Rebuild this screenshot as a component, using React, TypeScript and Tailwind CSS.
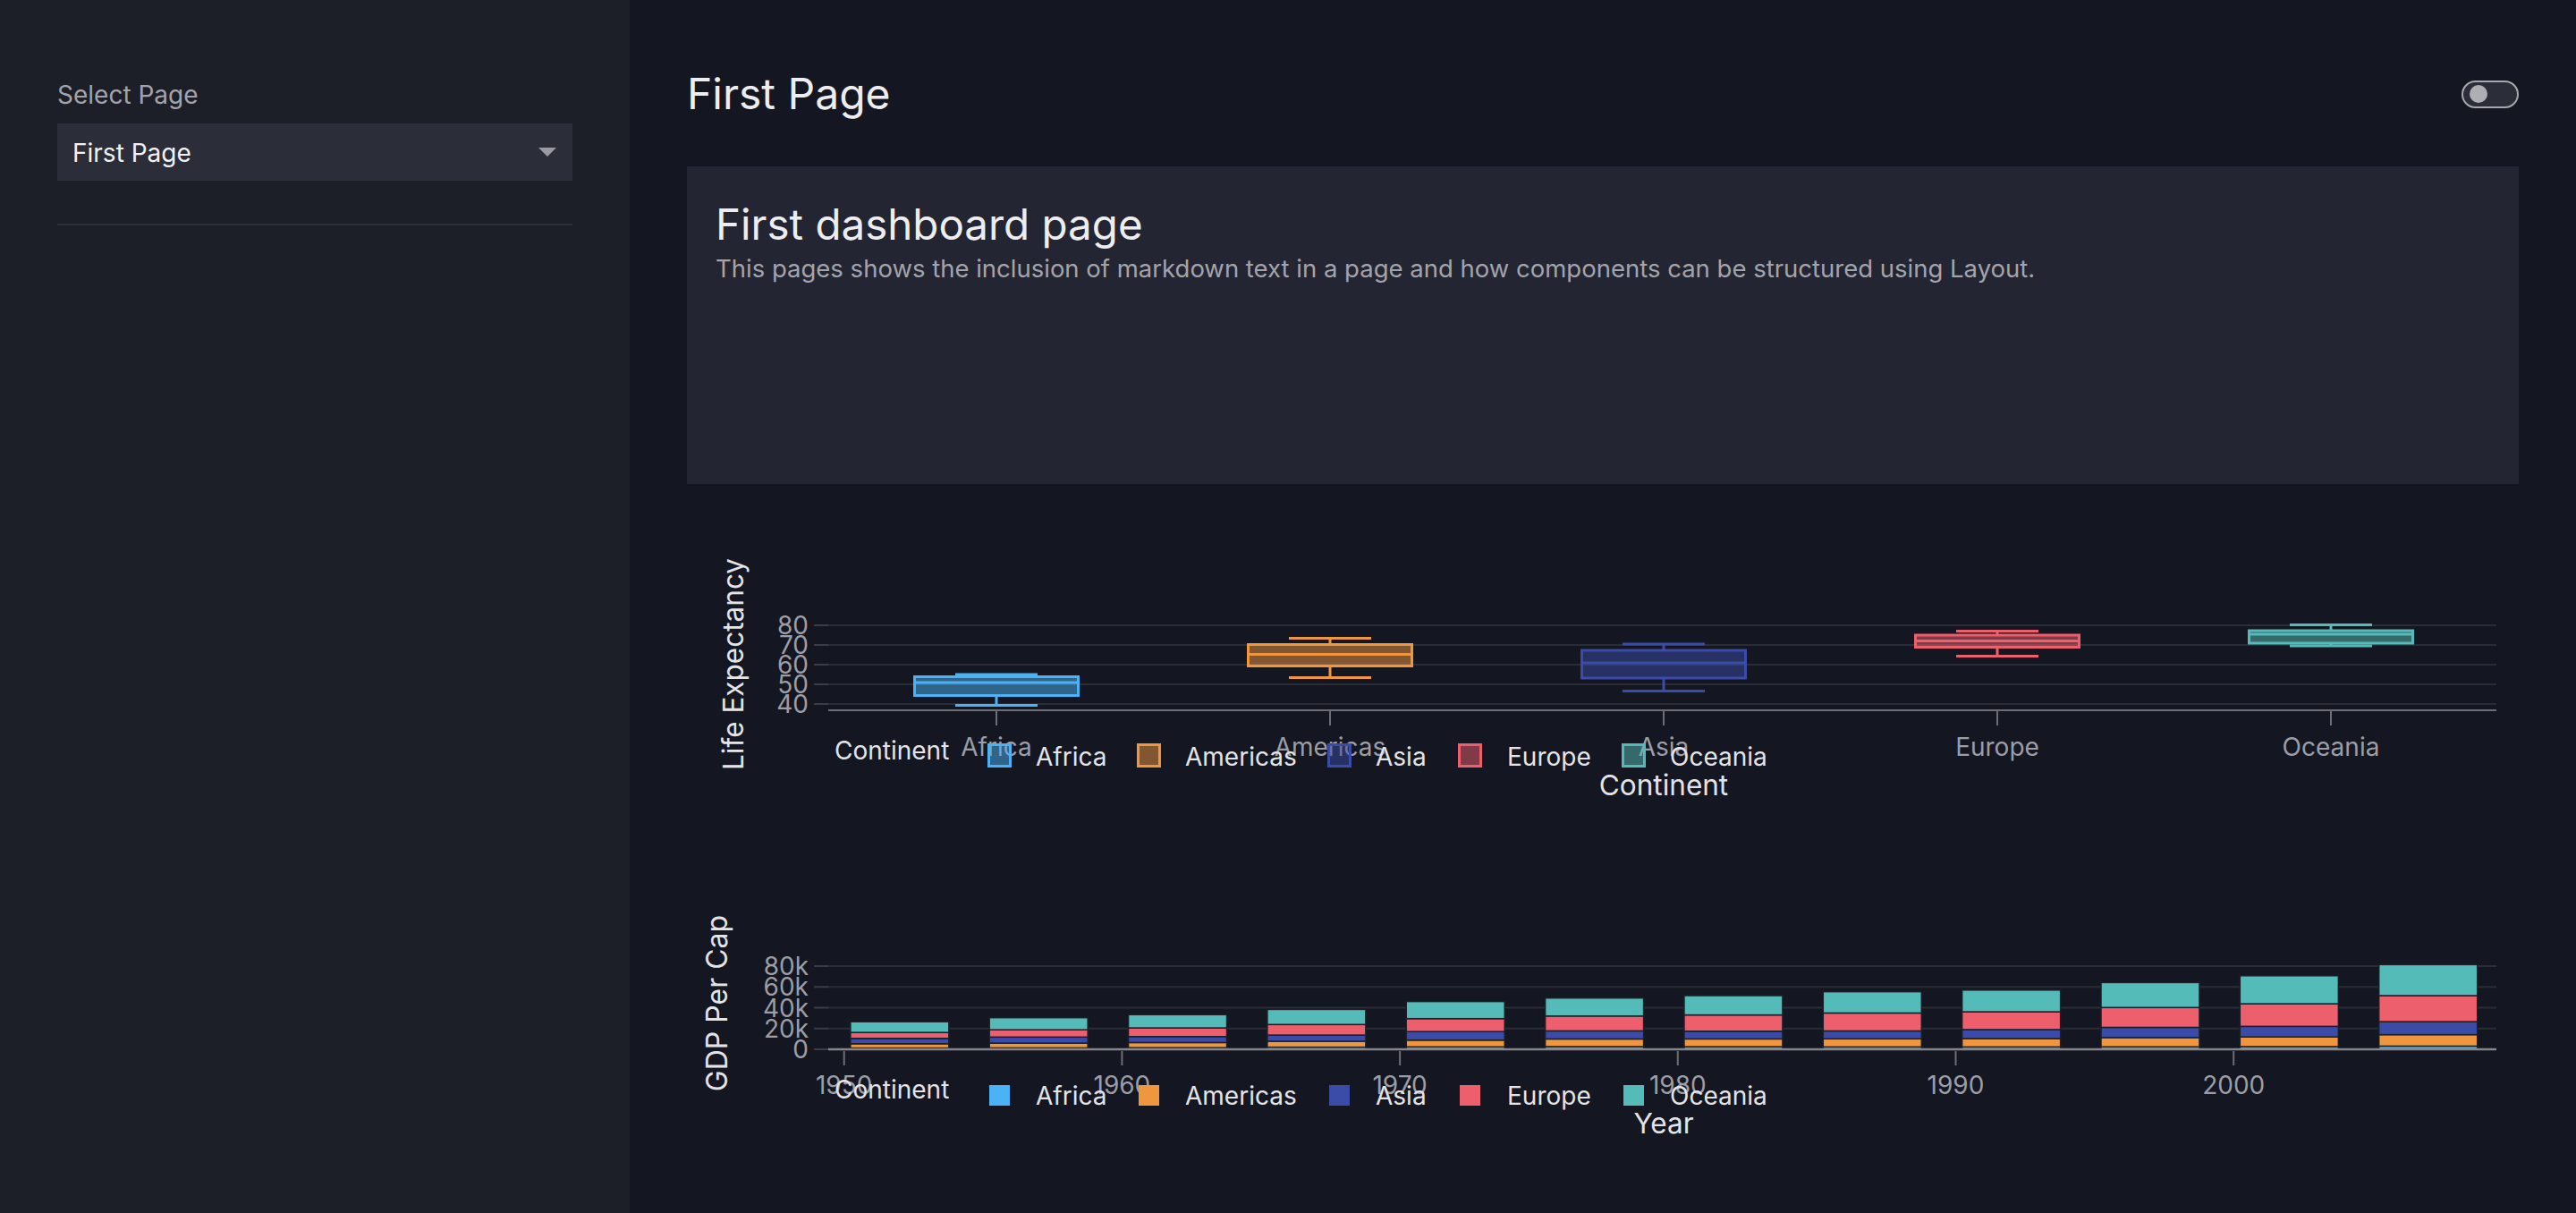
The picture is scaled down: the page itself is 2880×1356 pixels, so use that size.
import React from "react";

const C = {
  Africa: "#4AB2F5",
  Americas: "#F0963F",
  Asia: "#3B4BA8",
  Europe: "#EE5F6D",
  Oceania: "#55BBB8",
};
const names = ["Africa", "Americas", "Asia", "Europe", "Oceania"] as const;
const swX = [1104, 1271, 1484, 1630, 1813];
const lbX = [1158, 1325, 1538, 1685, 1867];

const GRID = "#2a2c36";
const AXIS = "#6c6d75";
const TICK = "#9c9da5";
const TITLE = "#e4e4e7";

type Box = { cx: number; top: number; bot: number; med: number; hi: number; lo: number };
const boxes: Box[] = [
  { cx: 1114, top: 756.5, bot: 777.5, med: 763, hi: 754, lo: 788.5 },
  { cx: 1487, top: 720.5, bot: 744.5, med: 731.5, hi: 713.5, lo: 757.5 },
  { cx: 1860, top: 727, bot: 758, med: 741, hi: 720, lo: 772.5 },
  { cx: 2233, top: 710, bot: 723.5, med: 716.5, hi: 705.5, lo: 733.5 },
  { cx: 2606, top: 705, bot: 719, med: 709, hi: 698.5, lo: 722 },
];

function BoxChart() {
  const yv = (v: number) => 787 - (v - 40) * 2.2;
  return (
    <svg width={2048} height={389} viewBox="768 541 2048 389" className="block">
      {[40, 50, 60, 70, 80].map((v) => (
        <g key={v}>
          <line x1={926} x2={2791} y1={yv(v)} y2={yv(v)} stroke={GRID} strokeWidth={2} />
          <line x1={910} x2={926} y1={yv(v)} y2={yv(v)} stroke="#3a3c46" strokeWidth={2} />
          <text x={904} y={yv(v) + 10} textAnchor="end" fontSize={28} fill={TICK} fontFamily="Inter">
            {v}
          </text>
        </g>
      ))}
      <line x1={926} x2={2791} y1={794} y2={794} stroke={AXIS} strokeWidth={2} />
      {boxes.map((b, i) => {
        const col = C[names[i]];
        return (
          <g key={i}>
            <line x1={b.cx} x2={b.cx} y1={795} y2={811} stroke={AXIS} strokeWidth={2} />
            <text x={b.cx} y={845} textAnchor="middle" fontSize={28} fill={TICK} fontFamily="Inter">
              {names[i]}
            </text>
            <line x1={b.cx} x2={b.cx} y1={b.hi} y2={b.top} stroke={col} strokeWidth={3} />
            <line x1={b.cx} x2={b.cx} y1={b.bot} y2={b.lo} stroke={col} strokeWidth={3} />
            <line x1={b.cx - 46} x2={b.cx + 46} y1={b.hi} y2={b.hi} stroke={col} strokeWidth={3} />
            <line x1={b.cx - 46} x2={b.cx + 46} y1={b.lo} y2={b.lo} stroke={col} strokeWidth={3} />
            <rect
              x={b.cx - 91.5}
              y={b.top}
              width={183}
              height={b.bot - b.top}
              fill={col}
              fillOpacity={0.5}
              stroke={col}
              strokeWidth={3}
            />
            <line x1={b.cx - 91.5} x2={b.cx + 91.5} y1={b.med} y2={b.med} stroke={col} strokeWidth={3} />
          </g>
        );
      })}
      <text transform="translate(831,742.5) rotate(-90)" textAnchor="middle" fontSize={31.5} fill={TITLE} fontFamily="Inter">
        Life Expectancy
      </text>
      <text x={933} y={849} fontSize={28} fill={TITLE} fontFamily="Inter">
        Continent
      </text>
      {names.map((n, i) => (
        <g key={n}>
          <rect x={swX[i] + 1.5} y={832.5} width={24} height={24} fill={C[n]} fillOpacity={0.5} stroke={C[n]} strokeWidth={3} />
          <text x={lbX[i]} y={856} fontSize={28} fill={TITLE} fontFamily="Inter">
            {n}
          </text>
        </g>
      ))}
      <text x={1860} y={889} textAnchor="middle" fontSize={31.5} fill={TITLE} fontFamily="Inter">
        Continent
      </text>
    </svg>
  );
}

const years = [1952, 1957, 1962, 1967, 1972, 1977, 1982, 1987, 1992, 1997, 2002, 2007];
const gdp: number[][] = [
  [1253, 1385, 1598, 2050, 2340, 2586, 2482, 2283, 2282, 2379, 2599, 3089],
  [4079, 4616, 4902, 5668, 6491, 7352, 7507, 7793, 8045, 8889, 9288, 11003],
  [5195, 5788, 5729, 5971, 8187, 7791, 7435, 7608, 8640, 9834, 10174, 12473],
  [5661, 6963, 8366, 10143, 12480, 14284, 15618, 17214, 17062, 19077, 21712, 25054],
  [10298, 11599, 12696, 14495, 16417, 17284, 18555, 20448, 20894, 24024, 26939, 29810],
];

function BarChart() {
  const y0 = 1173;
  const k = 0.0011625;
  const xy = (yr: number) => 943.7 + (yr - 1950) * 31.07;
  return (
    <svg width={2048} height={370} viewBox="768 930 2048 370" className="block">
      {[20000, 40000, 60000, 80000].map((v) => (
        <g key={v}>
          <line x1={926} x2={2791} y1={y0 - v * k} y2={y0 - v * k} stroke={GRID} strokeWidth={2} />
        </g>
      ))}
      {[0, 20000, 40000, 60000, 80000].map((v) => (
        <g key={v}>
          <line x1={910} x2={926} y1={y0 - v * k} y2={y0 - v * k} stroke="#3a3c46" strokeWidth={2} />
          <text x={904} y={y0 - v * k + 10} textAnchor="end" fontSize={28} fill={TICK} fontFamily="Inter">
            {v === 0 ? "0" : `${v / 1000}k`}
          </text>
        </g>
      ))}
      {years.map((yr, j) => {
        let acc = 0;
        return (
          <g key={yr}>
            {names.map((n, i) => {
              const v = gdp[i][j];
              const yTop = y0 - (acc + v) * k;
              const h = v * k;
              acc += v;
              return (
                <rect
                  key={n}
                  x={xy(yr) - 55}
                  y={yTop}
                  width={110}
                  height={h}
                  fill={C[n]}
                  stroke="#1a2029"
                  strokeWidth={1.5}
                />
              );
            })}
          </g>
        );
      })}
      <line x1={926} x2={2791} y1={y0} y2={y0} stroke="#85868c" strokeWidth={2.5} />
      {[1950, 1960, 1970, 1980, 1990, 2000].map((yr) => (
        <g key={yr}>
          <line x1={xy(yr)} x2={xy(yr)} y1={1175} y2={1191} stroke={AXIS} strokeWidth={2} />
          <text x={xy(yr)} y={1223} textAnchor="middle" fontSize={28} fill={TICK} fontFamily="Inter">
            {yr}
          </text>
        </g>
      ))}
      <text transform="translate(813,1121.5) rotate(-90)" textAnchor="middle" fontSize={32} fill={TITLE} fontFamily="Inter">
        GDP Per Cap
      </text>
      <text x={933} y={1228} fontSize={28} fill={TITLE} fontFamily="Inter">
        Continent
      </text>
      {names.map((n, i) => (
        <g key={n}>
          <rect x={swX[i] + 2} y={1213} width={23} height={23} fill={C[n]} />
          <text x={lbX[i]} y={1235} fontSize={28} fill={TITLE} fontFamily="Inter">
            {n}
          </text>
        </g>
      ))}
      <text x={1860} y={1267} textAnchor="middle" fontSize={31.5} fill={TITLE} fontFamily="Inter">
        Year
      </text>
    </svg>
  );
}

export default function App() {
  return (
    <div className="flex h-[1356px] w-[2880px] overflow-hidden bg-[#141721] font-['Inter',sans-serif]">
      <aside className="w-[704px] shrink-0 bg-[#1c1e28] px-[64px] pt-[86px]">
        <div className="text-[28px] leading-[40px] text-[#a3a4ab]">Select Page</div>
        <div className="mt-[12px] flex h-[64px] items-center justify-between bg-[#2b2e38] pl-[17px] pr-[17px]">
          <span className="pt-[2px] text-[28px] leading-[40px] text-[#f1f1f3]">First Page</span>
          <svg width="20" height="10" viewBox="0 0 20 10" className="mr-[1px]">
            <polygon points="0,0 20,0 10,10" fill="#9a9ba2" />
          </svg>
        </div>
        <div className="mt-[48px] h-[2px] bg-[#2d303a]" />
      </aside>
      <main className="flex-1 px-[64px] pt-[76px]">
        <div className="flex h-[58px] items-center justify-between">
          <h1 className="text-[48px] leading-[58px] text-[#ededf0]">First Page</h1>
          <div className="flex h-[31px] w-[64px] items-center rounded-full border-2 border-[#a7a8ad] bg-[#2b2e38] pl-[7px]">
            <div className="h-[20px] w-[20px] rounded-full bg-[#aeafb4]" />
          </div>
        </div>
        <div className="mt-[52px] h-[355px] bg-[#232532] px-[32px] pt-[37px]">
          <h2 className="text-[47.5px] leading-[56px] text-[#ededf0]">First dashboard page</h2>
          <p className="text-[27.5px] leading-[42px] text-[#a3a4ab]">
            This pages shows the inclusion of markdown text in a page and how components can be structured using Layout.
          </p>
        </div>
        <BoxChart />
        <BarChart />
      </main>
    </div>
  );
}
